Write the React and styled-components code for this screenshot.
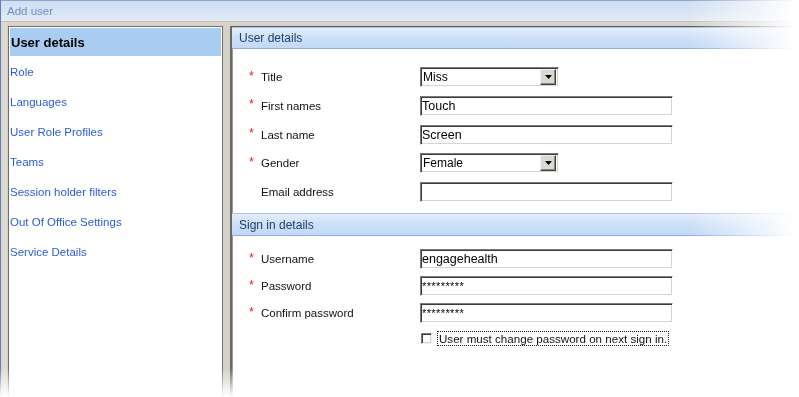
import React from 'react';
import styled, { createGlobalStyle } from 'styled-components';

const GlobalStyle = createGlobalStyle`
  html, body {
    margin: 0;
    padding: 0;
    background: #fff;
  }
  body {
    font-family: "Liberation Sans", Arial, sans-serif;
  }
`;

/* the screenshot fades out to the right and to the bottom */
const FadeRight = styled('div')`
  width: 799px;
  height: 397px;
  overflow: hidden;
  -webkit-mask-image: linear-gradient(to right, #000 0, #000 690px, transparent 796px);
  mask-image: linear-gradient(to right, #000 0, #000 690px, transparent 796px);
`;

const FadeBottom = styled('div')`
  height: 100%;
  -webkit-mask-image: linear-gradient(to bottom, #000 0, #000 368px, transparent 397px);
  mask-image: linear-gradient(to bottom, #000 0, #000 368px, transparent 397px);
`;

const Window = styled('div')`
  display: flex;
  flex-direction: column;
  height: 100%;
  border-left: 1px solid #5f80b8;
  box-shadow: inset 1px 0 #b9cbe6;
`;

const TitleBar = styled('div')`
  height: 20px;
  flex: none;
  display: flex;
  align-items: center;
  padding-left: 6px;
  border-top: 1px solid #8aa4cc;
  background: linear-gradient(to bottom, #d1dff2 0%, #d9e5f5 60%, #e3ecf8 100%);
`;

const Title = styled('span')`
  font-size: 11.5px;
  color: #6f8fc4;
`;

const Frame = styled('div')`
  flex: 1;
  display: flex;
  gap: 7px;
  padding: 4px 0 0 7px;
  background: linear-gradient(to right, #d8d4cc, #e2ded6 4px, #d6d2ca 7px);
  border-top: 1px solid #c9c1ae;
`;

const NavPanel = styled('nav')`
  width: 211px;
  flex: none;
  display: flex;
  flex-direction: column;
  gap: 2px;
  padding: 1px;
  border: 1px solid #6e6e6e;
  border-bottom: none;
  background: #fff;
`;

const NavItem = styled('div')`
  height: 28px;
  display: flex;
  align-items: center;
  padding-left: ${(p) => (p.$active ? '1px' : '0')};
  background: ${(p) => (p.$active ? '#a9cdf0' : 'transparent')};
  color: ${(p) => (p.$active ? '#000' : '#2a5cd6')};
  font-size: ${(p) => (p.$active ? '13px' : '11.5px')};
  font-weight: ${(p) => (p.$active ? 'bold' : 'normal')};
`;

const Content = styled('main')`
  flex: 1;
  display: flex;
  flex-direction: column;
  background: #fff;
  border-left: 2px solid #6a6a6a;
  border-top: 1px solid #5a5a5a;
  box-shadow: inset 1px 0 #9a9a9a;
`;

const SectionHeader = styled('div')`
  height: ${(p) => p.$h}px;
  margin-top: ${(p) => p.$top || 0}px;
  display: flex;
  align-items: center;
  padding-left: 7px;
  font-size: 12px;
  color: #1f3f70;
  border-top: 1px solid #a9c4ea;
  border-bottom: 1px solid #8eafe0;
  background: linear-gradient(to bottom, #e4eefb 0%, #cfe1f8 45%, #c2d8f6 100%);
`;

const Form = styled('div')`
  display: grid;
  grid-template-columns: 12px 159px auto;
  row-gap: ${(p) => p.$gap}px;
  align-items: center;
  padding: ${(p) => p.$top}px 0 0 17px;
`;

const Star = styled('span')`
  color: #e31b1b;
  font-size: 12.5px;
  margin-top: -3px;
`;

const Label = styled('span')`
  font-size: 11.5px;
  color: #111;
`;

const TextBox = styled('input')`
  width: ${(p) => p.$w}px;
  height: 20px;
  box-sizing: border-box;
  margin: 0;
  padding: 0 2px 0 1px;
  border: 1px solid;
  border-color: #7c7c7c #fff #fff #7c7c7c;
  box-shadow: inset 1px 1px #3c3c3c, inset -1px -1px #d8d4cc;
  background: #fff;
  font-family: "Liberation Sans", Arial, sans-serif;
  font-size: ${(p) => (p.$masked ? '11px' : '12.5px')};
  letter-spacing: ${(p) => (p.$masked ? '0.4px' : '0')};
  color: #000;
  outline: none;
`;

const Select = styled('div')`
  width: 139px;
  height: 20px;
  box-sizing: border-box;
  display: flex;
  align-items: center;
  justify-content: space-between;
  padding: 0 2px 0 1px;
  border: 1px solid;
  border-color: #7c7c7c #fff #fff #7c7c7c;
  box-shadow: inset 1px 1px #3c3c3c, inset -1px -1px #d8d4cc;
  background: #fff;
`;

const SelectValue = styled('span')`
  padding-left: 1px;
  font-size: 12px;
  color: #000;
`;

const DropButton = styled('span')`
  width: 16px;
  height: 16px;
  box-sizing: border-box;
  display: flex;
  align-items: center;
  justify-content: center;
  background: #dcd9d2;
  border: 1px solid;
  border-color: #f4f2ee #404040 #404040 #f4f2ee;
  box-shadow: inset -1px -1px #8a8a8a;
`;

const CheckRow = styled('label')`
  grid-column: 3;
  display: flex;
  align-items: center;
  gap: 5px;
  margin: 1px 0 0 1px;
`;

const CheckBox = styled('span')`
  width: 11px;
  height: 11px;
  box-sizing: border-box;
  background: #fff;
  border: 1px solid;
  border-color: #7c7c7c #f4f2ee #f4f2ee #7c7c7c;
  box-shadow: inset 1px 1px #3c3c3c, inset -1px -1px #d8d4cc;
`;

const CheckText = styled('span')`
  padding: 0 1px;
  border: 1px dotted #222;
  font-size: 11.6px;
  line-height: 13px;
  color: #111;
`;

const Arrow = () => (
  <svg width="7" height="4" viewBox="0 0 7 4">
    <path d="M0 0h7L3.5 4z" fill="#000" />
  </svg>
);

const navItems = [
  'User details',
  'Role',
  'Languages',
  'User Role Profiles',
  'Teams',
  'Session holder filters',
  'Out Of Office Settings',
  'Service Details',
];

const Row = ({ required, label, children }) => (
  <>
    {required ? <Star>*</Star> : <span />}
    <Label>{label}</Label>
    {children}
  </>
);

const DropDown = ({ value }) => (
  <Select>
    <SelectValue>{value}</SelectValue>
    <DropButton>
      <Arrow />
    </DropButton>
  </Select>
);

const App = () => (
  <>
    <GlobalStyle />
    <FadeRight>
      <FadeBottom>
        <Window>
          <TitleBar>
            <Title>Add user</Title>
          </TitleBar>
          <Frame>
            <NavPanel>
              {navItems.map((item, i) => (
                <NavItem key={item} $active={i === 0}>
                  {item}
                </NavItem>
              ))}
            </NavPanel>
            <Content>
              <SectionHeader $h={20}>User details</SectionHeader>
              <Form $top={18} $gap={8.75}>
                <Row required label="Title">
                  <DropDown value="Miss" />
                </Row>
                <Row required label="First names">
                  <TextBox $w={253} value="Touch" readOnly />
                </Row>
                <Row required label="Last name">
                  <TextBox $w={253} value="Screen" readOnly />
                </Row>
                <Row required label="Gender">
                  <DropDown value="Female" />
                </Row>
                <Row label="Email address">
                  <TextBox $w={253} value="" readOnly />
                </Row>
              </Form>
              <SectionHeader $h={21} $top={11}>Sign in details</SectionHeader>
              <Form $top={13} $gap={7}>
                <Row required label="Username">
                  <TextBox $w={253} value="engagehealth" readOnly />
                </Row>
                <Row required label="Password">
                  <TextBox $w={253} $masked value="*********" readOnly />
                </Row>
                <Row required label="Confirm password">
                  <TextBox $w={253} $masked value="*********" readOnly />
                </Row>
                <CheckRow>
                  <CheckBox />
                  <CheckText>User must change password on next sign in.</CheckText>
                </CheckRow>
              </Form>
            </Content>
          </Frame>
        </Window>
      </FadeBottom>
    </FadeRight>
  </>
);

export default App;
